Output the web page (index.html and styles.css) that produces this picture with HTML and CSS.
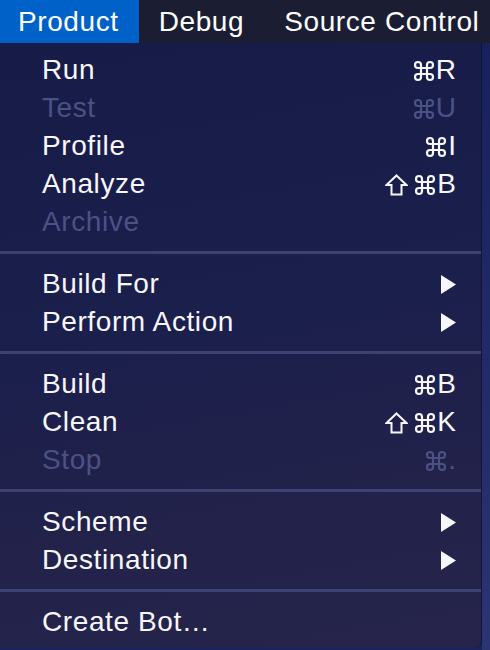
FILE: index.html
```html
<!DOCTYPE html>
<html>
<head>
<meta charset="utf-8">
<link rel="stylesheet" href="styles.css">
</head>
<body>
<div class="screen">
  <nav class="menubar">
    <span class="mb-item active">Product</span>
    <span class="mb-item">Debug</span>
    <span class="mb-item">Source Control</span>
  </nav>
  <div class="below">
    <div class="menu">
      <div class="row"><span class="label">Run</span><span class="key"><svg class="cmd" viewBox="0 0 22 22"><path d="M8,8 L8,5 A3,3 0 1 0 5,8 L17,8 A3,3 0 1 0 14,5 L14,17 A3,3 0 1 0 17,14 L5,14 A3,3 0 1 0 8,17 Z"/></svg>R</span></div>
      <div class="row disabled"><span class="label">Test</span><span class="key"><svg class="cmd" viewBox="0 0 22 22"><path d="M8,8 L8,5 A3,3 0 1 0 5,8 L17,8 A3,3 0 1 0 14,5 L14,17 A3,3 0 1 0 17,14 L5,14 A3,3 0 1 0 8,17 Z"/></svg>U</span></div>
      <div class="row"><span class="label">Profile</span><span class="key"><svg class="cmd" viewBox="0 0 22 22"><path d="M8,8 L8,5 A3,3 0 1 0 5,8 L17,8 A3,3 0 1 0 14,5 L14,17 A3,3 0 1 0 17,14 L5,14 A3,3 0 1 0 8,17 Z"/></svg>I</span></div>
      <div class="row"><span class="label">Analyze</span><span class="key"><svg class="shift" viewBox="0 0 23 22"><path d="M11.5,1.5 L21.5,11 L16.5,11 L16.5,20.5 L6.5,20.5 L6.5,11 L1.5,11 Z"/></svg><svg class="cmd" viewBox="0 0 22 22"><path d="M8,8 L8,5 A3,3 0 1 0 5,8 L17,8 A3,3 0 1 0 14,5 L14,17 A3,3 0 1 0 17,14 L5,14 A3,3 0 1 0 8,17 Z"/></svg>B</span></div>
      <div class="row disabled"><span class="label">Archive</span></div>
      <div class="sep"></div>
      <div class="row"><span class="label">Build For</span><svg class="arrow" viewBox="0 0 16 19"><polygon points="1,0 16,9.5 1,19" /></svg></div>
      <div class="row"><span class="label">Perform Action</span><svg class="arrow" viewBox="0 0 16 19"><polygon points="1,0 16,9.5 1,19" /></svg></div>
      <div class="sep"></div>
      <div class="row"><span class="label">Build</span><span class="key"><svg class="cmd" viewBox="0 0 22 22"><path d="M8,8 L8,5 A3,3 0 1 0 5,8 L17,8 A3,3 0 1 0 14,5 L14,17 A3,3 0 1 0 17,14 L5,14 A3,3 0 1 0 8,17 Z"/></svg>B</span></div>
      <div class="row"><span class="label">Clean</span><span class="key"><svg class="shift" viewBox="0 0 23 22"><path d="M11.5,1.5 L21.5,11 L16.5,11 L16.5,20.5 L6.5,20.5 L6.5,11 L1.5,11 Z"/></svg><svg class="cmd" viewBox="0 0 22 22"><path d="M8,8 L8,5 A3,3 0 1 0 5,8 L17,8 A3,3 0 1 0 14,5 L14,17 A3,3 0 1 0 17,14 L5,14 A3,3 0 1 0 8,17 Z"/></svg>K</span></div>
      <div class="row disabled"><span class="label">Stop</span><span class="key"><svg class="cmd" viewBox="0 0 22 22"><path d="M8,8 L8,5 A3,3 0 1 0 5,8 L17,8 A3,3 0 1 0 14,5 L14,17 A3,3 0 1 0 17,14 L5,14 A3,3 0 1 0 8,17 Z"/></svg>.</span></div>
      <div class="sep"></div>
      <div class="row"><span class="label">Scheme</span><svg class="arrow" viewBox="0 0 16 19"><polygon points="1,0 16,9.5 1,19" /></svg></div>
      <div class="row"><span class="label">Destination</span><svg class="arrow" viewBox="0 0 16 19"><polygon points="1,0 16,9.5 1,19" /></svg></div>
      <div class="sep"></div>
      <div class="row"><span class="label">Create Bot…</span></div>
    </div>
    <div class="strip"></div>
  </div>
</div>
</body>
</html>
```
FILE: styles.css
```css
html, body {
  margin: 0;
  padding: 0;
}
body {
  width: 490px;
  height: 650px;
  overflow: hidden;
  background: #1a2360;
  font-family: "Liberation Sans", Arial, sans-serif;
  color: #f5f5fa;
}
.screen {
  display: flex;
  flex-direction: column;
  height: 650px;
}
.menubar {
  display: flex;
  height: 43px;
  background: #1b1e33;
  font-size: 28px;
  line-height: 43px;
  letter-spacing: 0.6px;
  white-space: nowrap;
}
.mb-item {
  padding: 0 20px;
  color: #ffffff;
}
.mb-item.active {
  background: #0061c9;
  padding: 0 20px 0 18px;
}
.below {
  display: flex;
  flex: 1;
}
.menu {
  width: 482px;
  height: 605px;
  box-sizing: border-box;
  padding: 8px 0 7px;
  background: linear-gradient(170deg, #161b48 0%, #1b1f4c 45%, #22224a 75%, #26244b 100%);
  border-right: 1px solid #11143a;
  border-bottom-right-radius: 7px;
  display: flex;
  flex-direction: column;
}
.strip {
  flex: 1;
  background: linear-gradient(180deg, #18215e 0%, #222c6a 60%, #2c3574 100%);
}
.row {
  display: flex;
  align-items: center;
  justify-content: space-between;
  height: 38px;
  padding: 0 25px 0 42px;
  font-size: 28px;
  line-height: 38px;
  letter-spacing: 0.6px;
  color: #f7f7fb;
}
.row.disabled {
  color: #4b5283;
}
.row.disabled svg {
  fill: #4b5283;
}
.key {
  display: flex;
  align-items: center;
  letter-spacing: 0;
}
.cmd {
  width: 22px;
  height: 22px;
  margin-right: 1px;
  margin-top: 1px;
  fill: none;
  stroke: currentColor;
  stroke-width: 2.2;
}
.row.disabled .cmd {
  fill: none;
}
.shift {
  width: 23px;
  height: 22px;
  margin-right: 6px;
  margin-top: 1px;
  fill: none;
  stroke: currentColor;
  stroke-width: 2;
  stroke-linejoin: miter;
}
.row.disabled .shift {
  fill: none;
}
.arrow {
  width: 16px;
  height: 19px;
  fill: #f7f7fb;
}
.sep {
  height: 24px;
  display: flex;
  flex-direction: column;
  justify-content: center;
}
.sep::before {
  content: "";
  display: block;
  height: 3px;
  margin-top: -1px;
  background: #3d4273;
}
```
